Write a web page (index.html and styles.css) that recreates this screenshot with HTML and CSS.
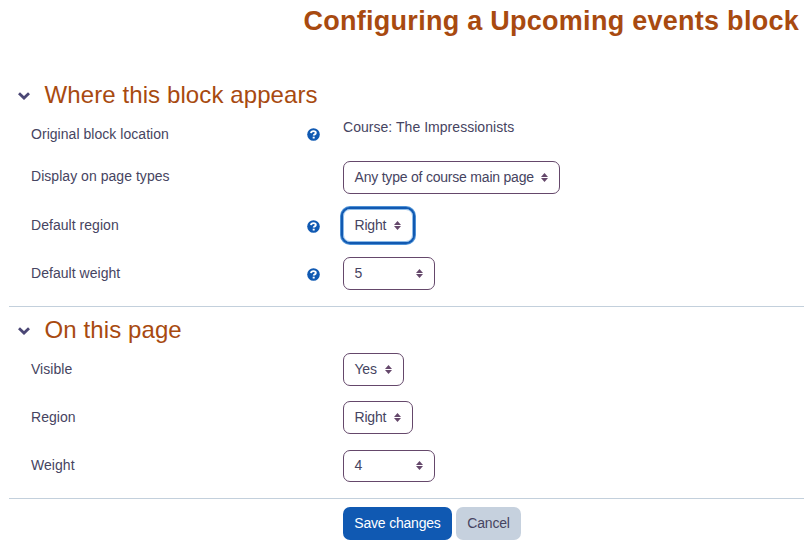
FILE: index.html
```html
<!DOCTYPE html>
<html lang="en">
<head>
<meta charset="utf-8">
<title>Configuring a Upcoming events block</title>
<link rel="stylesheet" href="styles.css">
</head>
<body>
<svg width="0" height="0" class="defs" aria-hidden="true">
  <symbol id="chevron" viewBox="0 0 14 10"><path d="M2 2.2 7 7l5-4.8" fill="none" stroke="#4b4775" stroke-width="2.8"/></symbol>
  <symbol id="help" viewBox="0 0 13 13"><circle cx="6.5" cy="6.5" r="6.3" fill="#1059b2"/><path d="M4 5.1C4.1 3.7 5.2 3.1 6.5 3.1c1.4 0 2.3.7 2.3 1.8 0 1.5-2.1 1.4-2.1 2.7" fill="none" stroke="#fff" stroke-width="1.9"/><rect x="5.7" y="8.7" width="2" height="1.8" fill="#fff"/></symbol>
  <symbol id="sort" viewBox="0 0 7 9"><path d="M3.5 0 7 4H0zM3.5 9 0 5h7z" fill="#65486b"/></symbol>
</svg>
<form class="page">
  <h1>Configuring a Upcoming events block</h1>
  <section class="appears">
    <h2><svg class="chevron"><use href="#chevron"/></svg><span>Where this block appears</span></h2>
    <div class="row origin"><div class="label">Original block location<svg class="help"><use href="#help"/></svg></div><div class="static">Course: The Impressionists</div></div>
    <div class="row types"><div class="label">Display on page types</div><div class="select wide">Any type of course main page<svg><use href="#sort"/></svg></div></div>
    <div class="row"><div class="label">Default region<svg class="help"><use href="#help"/></svg></div><div class="select right focused">Right<svg><use href="#sort"/></svg></div></div>
    <div class="row"><div class="label">Default weight<svg class="help"><use href="#help"/></svg></div><div class="select number">5<svg><use href="#sort"/></svg></div></div>
  </section>
  <section class="this-page">
    <h2><svg class="chevron"><use href="#chevron"/></svg><span>On this page</span></h2>
    <div class="row"><div class="label">Visible</div><div class="select yes">Yes<svg><use href="#sort"/></svg></div></div>
    <div class="row"><div class="label">Region</div><div class="select right">Right<svg><use href="#sort"/></svg></div></div>
    <div class="row"><div class="label">Weight</div><div class="select number short">4<svg><use href="#sort"/></svg></div></div>
  </section>
  <div class="actions"><button type="button" class="save">Save changes</button><button type="button" class="cancel">Cancel</button></div>
</form>
</body>
</html>
```
FILE: styles.css
```css
* { box-sizing: border-box; }
body { margin: 0; background: #fff; color: #464461; font: 14px/22px "Liberation Sans", Arial, sans-serif; letter-spacing: .04px; }
.defs { display: block; }
.page { padding-left: 9px; height: 551px; overflow: hidden; }
h1 { margin: 0; height: 79px; padding: 4px 5px 0 0; font-size: 27px; line-height: 34px; letter-spacing: .27px; text-align: right; color: #a84a10; white-space: nowrap; }
section { border-bottom: 1px solid #c3d0dc; }
.appears { height: 228px; }
.this-page { height: 192px; padding-top: 7px; }
h2 { display: flex; align-items: center; margin: 0; height: 32px; padding-left: 8px; color: #a84a10; font-size: 24px; line-height: 32px; font-weight: 400; letter-spacing: .1px; }
.this-page h2 { height: 31px; }
.chevron { width: 14px; height: 10px; margin: 2px 13.5px 0 0; }
.row { display: grid; grid-template-columns: 312px 1fr; align-items: center; height: 48px; padding-left: 22px; }
.origin { height: 42px; padding-top: 3px; }
.types .label { padding-bottom: 2px; }
.label { display: flex; align-items: center; justify-content: space-between; padding-right: 23px; height: 22px; }
.help { width: 13px; height: 13px; margin-top: 2px; }
.static { height: 35px; }
.select { display: flex; align-items: center; justify-content: space-between; height: 33px; padding: 0 11px 0 10.5px; border: 1px solid #65486b; border-radius: 7px; white-space: nowrap; letter-spacing: -.21px; }
.select svg { width: 7px; height: 9px; flex: none; }
.wide { width: 217px; }
.right { width: 70px; }
.number { width: 92px; }
.short { height: 32px; margin-top: 1px; padding-bottom: 1px; }
.short svg { margin-top: 1px; }
.yes { width: 61px; }
.focused { border-color: #8dbbe8; box-shadow: 0 0 0 2px #1159b1, 0 0 0 3px #4d91d6; }
.actions { display: flex; gap: 4px; padding: 8px 0 0 334px; }
button { height: 33px; padding: 0 0 1px; border: 0; border-radius: 7px; font: inherit; letter-spacing: -.2px; }
.save { width: 109px; background: #1059b2; color: #fff; }
.cancel { width: 65px; background: #c6d1de; color: #464461; }
```
